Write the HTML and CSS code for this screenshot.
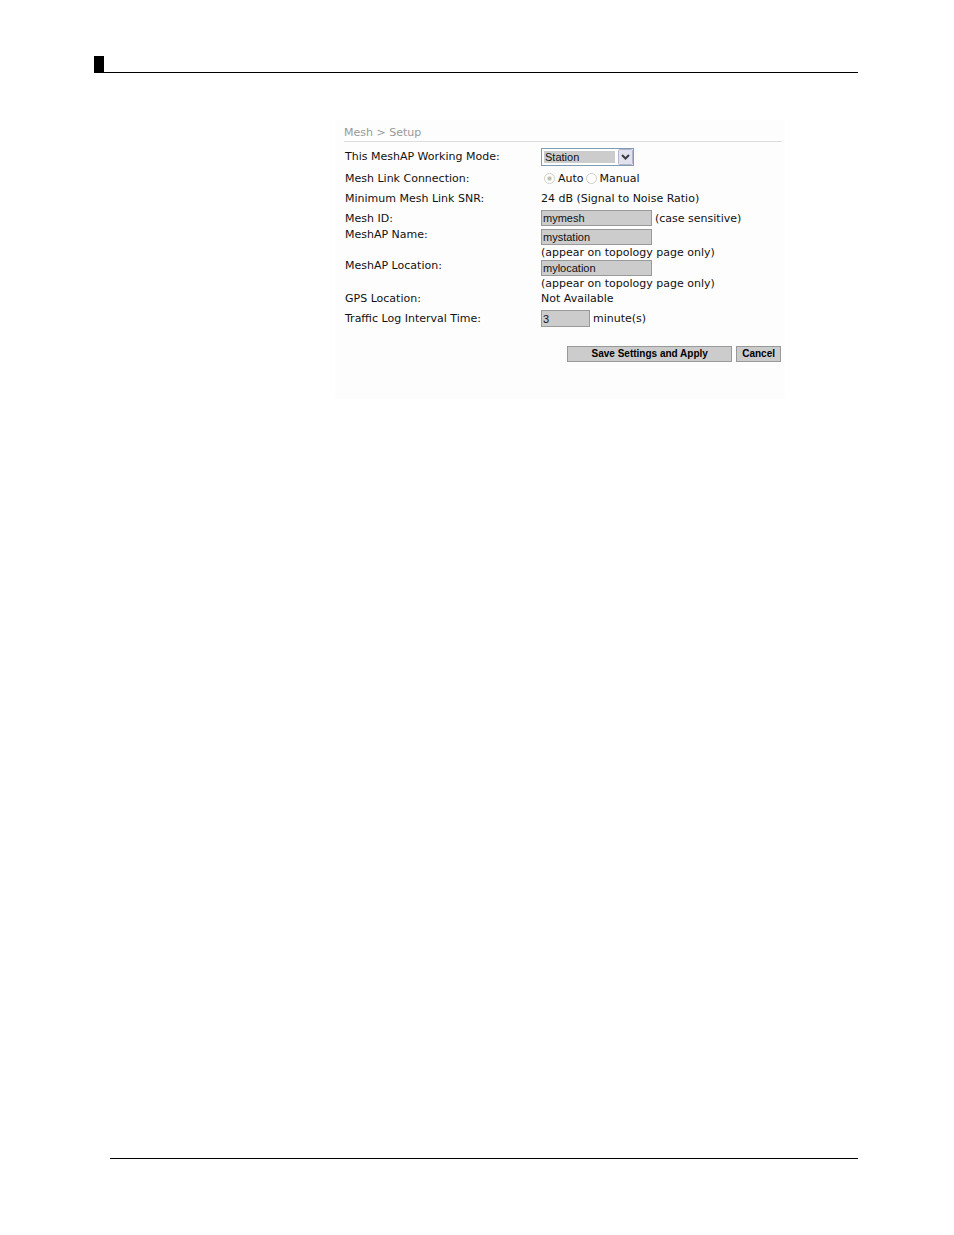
FILE: index.html
```html
<!DOCTYPE html>
<html lang="en">
<head>
<meta charset="utf-8">
<title>Mesh Setup</title>
<link rel="stylesheet" href="styles.css">
</head>
<body>
<header class="page-header"><span class="marker"></span></header>
<main class="page-main">
  <form class="panel">
    <h1 class="crumb">Mesh &gt; Setup</h1>
    <div class="fields">
      <div class="row row-mode">
        <label class="label" for="mode">This MeshAP Working Mode:</label>
        <div class="value">
          <span class="select-box">
            <select id="mode" class="select"><option>Station</option></select>
            <svg class="arrow" viewBox="0 0 15 16" aria-hidden="true">
              <rect x="0.5" y="0.5" width="14" height="15" rx="1" fill="#e2e2ee" stroke="#b4b4cc"/>
              <path d="M4 6l3.500 3.500L11 6" fill="none" stroke="#3c3c48" stroke-width="2"/>
            </svg>
          </span>
        </div>
      </div>
      <div class="row" role="radiogroup" aria-labelledby="link-label">
        <span class="label" id="link-label">Mesh Link Connection:</span>
        <div class="value radios">
          <input class="radio" type="radio" name="link" id="auto" checked><label for="auto">Auto</label>
          <input class="radio" type="radio" name="link" id="manual"><label for="manual">Manual</label>
        </div>
      </div>
      <div class="row">
        <span class="label">Minimum Mesh Link SNR:</span>
        <div class="value">24 dB (Signal to Noise Ratio)</div>
      </div>
      <div class="row">
        <label class="label" for="mesh-id">Mesh ID:</label>
        <div class="value"><input class="text" id="mesh-id" type="text" value="mymesh"><span>(case sensitive)</span></div>
      </div>
      <div class="row row-tall">
        <label class="label" for="name">MeshAP Name:</label>
        <div class="value stacked"><input class="text" id="name" type="text" value="mystation"><span>(appear on topology page only)</span></div>
      </div>
      <div class="row row-tall">
        <label class="label" for="location">MeshAP Location:</label>
        <div class="value stacked"><input class="text" id="location" type="text" value="mylocation"><span>(appear on topology page only)</span></div>
      </div>
      <div class="row row-short">
        <span class="label">GPS Location:</span>
        <div class="value">Not Available</div>
      </div>
      <div class="row row-mode">
        <label class="label" for="interval">Traffic Log Interval Time:</label>
        <div class="value"><input class="text number" id="interval" type="text" value="3"><span>minute(s)</span></div>
      </div>
    </div>
    <div class="actions">
      <button class="button save" type="button">Save Settings and Apply</button>
      <button class="button" type="button">Cancel</button>
    </div>
  </form>
</main>
<footer class="page-footer"></footer>
</body>
</html>
```
FILE: styles.css
```css
* { box-sizing: border-box; }

body {
  margin: 0;
  min-height: 100vh;
  display: flex;
  flex-direction: column;
  background: #fff;
  color: #111;
  font: 11px/15px "DejaVu Sans", Verdana, sans-serif;
}

.page-header {
  display: flex;
  margin: 56px 96px 0 94px;
  border-bottom: 1px solid #000;
}

.marker {
  width: 10px;
  height: 16px;
  background: #000;
}

.page-main {
  flex: 1;
  padding: 47px 96px 0 335px;
}

.panel {
  max-width: 450px;
  padding: 5px 3px 37px 9px;
  background: #fdfdfd;
}

.crumb {
  margin: 0;
  padding-bottom: 1px;
  border-bottom: 1px solid #ddd;
  color: #999;
  font-size: 11px;
  font-weight: normal;
}

.fields { padding: 3px 0 0 1px; }

.row {
  display: grid;
  grid-template-columns: 196px 1fr;
  align-items: center;
  min-height: 20px;
}

.row-mode { min-height: 23px; }
.row-tall { min-height: 31px; align-items: start; }
.row-short { min-height: 17px; }
.row-tall .label { margin-top: -1px; }

.value {
  display: flex;
  align-items: center;
  gap: 3px;
  white-space: nowrap;
}

.stacked {
  flex-direction: column;
  align-items: flex-start;
  gap: 0;
  padding-top: 1px;
  margin-bottom: -1px;
}

.select-box {
  position: relative;
  width: 93px;
  height: 18px;
  border: 1px solid #7f9db9;
  background: #fff;
}

.select {
  appearance: none;
  display: block;
  width: 100%;
  height: 16px;
  margin: 0;
  padding: 0 18px 0 1px;
  border: 2px solid #fff;
  border-radius: 0;
  background: linear-gradient(#ccc, #ccc) left / calc(100% - 16px) 100% no-repeat;
  background-clip: padding-box;
  color: #111;
  font: 11px/12px "Liberation Sans", Arial, sans-serif;
}

.arrow {
  position: absolute;
  top: 0;
  right: 0;
  width: 15px;
  height: 16px;
  pointer-events: none;
}

.radios { gap: 1px; }

.radio {
  appearance: none;
  width: 11px;
  height: 11px;
  margin: 0 2px 0 1px;
  border: 1px solid #d0cfc4;
  border-radius: 50%;
  background: #fff;
}

.radios { padding-left: 2px; }

.radio:checked { background: radial-gradient(circle, #bbbaac 0 1px, #fff 3px); }

.text {
  width: 111px;
  height: 16px;
  padding: 0 1px;
  border: 1px solid #999;
  border-radius: 0;
  background: #ccc;
  color: #111;
  font: 11px/14px "Liberation Sans", Arial, sans-serif;
}

.number {
  width: 49px;
  height: 17px;
}

.actions {
  display: flex;
  justify-content: flex-end;
  gap: 4px;
  padding: 16px 1px 0 0;
}

.button {
  height: 16px;
  padding: 0 5px;
  border: 1px solid #999;
  border-radius: 0;
  background: #ccc;
  color: #000;
  font: bold 10px/14px "Liberation Sans", Arial, sans-serif;
}

.save { width: 165px; }

.page-footer {
  margin: 0 96px 76px 110px;
  border-top: 1px solid #000;
}
```
